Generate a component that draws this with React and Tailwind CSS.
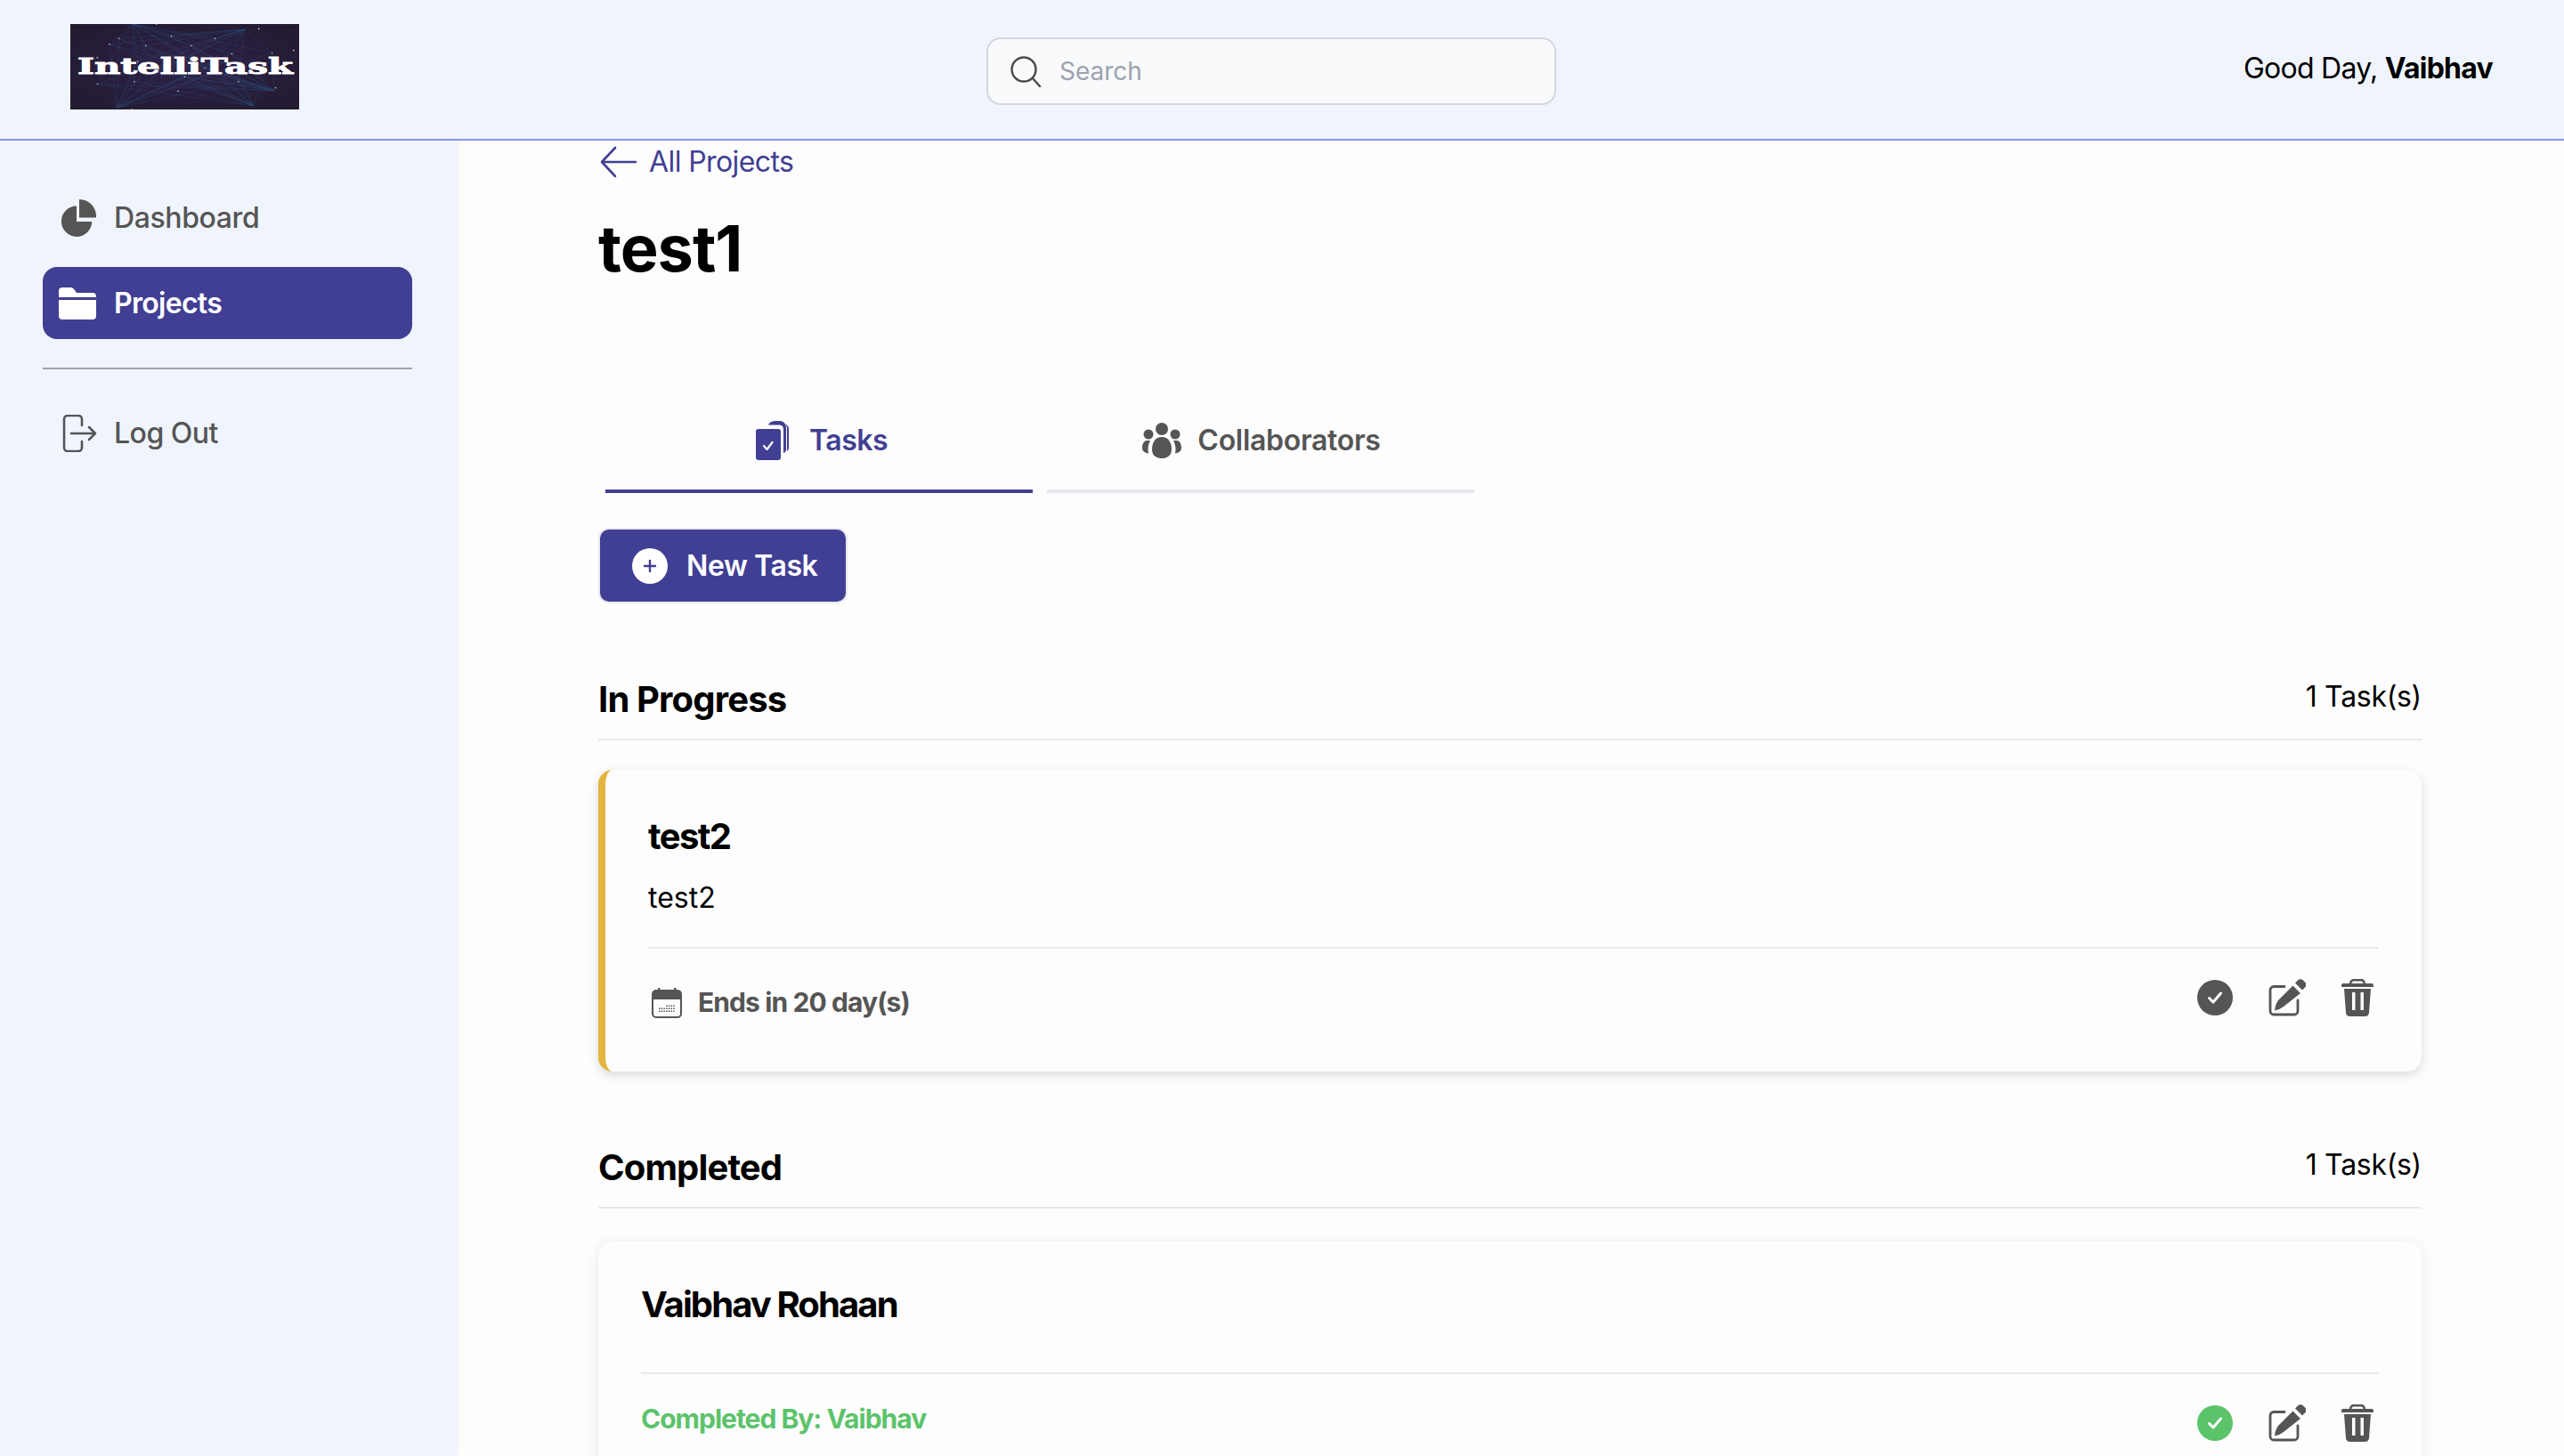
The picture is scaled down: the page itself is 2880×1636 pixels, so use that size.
import React from "react";

function Logo() {
  const hubs = [[128, 0], [280, 10], [332, 55], [305, 133], [92, 178], [40, 70], [160, 140]];
  const pts = [[58, 42], [72, 30], [112, 45], [150, 25], [180, 45], [215, 30], [240, 62], [215, 100], [170, 110], [130, 100], [95, 120], [40, 125], [250, 120], [200, 92], [100, 78], [300, 60]];
  return (
    <svg viewBox="0 0 256 96" className="w-[257px] h-[96px] block" preserveAspectRatio="none">
      <defs>
        <radialGradient id="bg" cx="50%" cy="50%" r="70%">
          <stop offset="0" stopColor="#2f2147" />
          <stop offset="1" stopColor="#211a2f" />
        </radialGradient>
      </defs>
      <rect width="256" height="96" fill="url(#bg)" />
      <g stroke="#2f6ea8" strokeWidth="0.35" opacity="0.55">
        {[[70, 0], [195, 6], [228, 75], [205, 92], [52, 94]].flatMap((h, i) =>
          pts.map((p, j) => (
            <line key={i + "-" + j} x1={h[0]} y1={h[1]} x2={(p[0] * 256) / 340} y2={(p[1] * 96) / 178} />
          ))
        )}
      </g>
      <g fill="#e8e8f0">
        {pts.map((p, i) => (
          <circle key={i} cx={(p[0] * 256) / 340} cy={(p[1] * 96) / 178} r="0.7" />
        ))}
        {hubs.map((h, i) => (
          <circle key={i} cx={(h[0] * 256) / 340} cy={(h[1] * 96) / 178} r="0.8" />
        ))}
      </g>
      <text x="8" y="56" fill="#ffffff" stroke="#ffffff" strokeWidth="0.9" fontFamily="'DejaVu Serif', serif" fontWeight="700" fontSize="25" textLength="241" lengthAdjust="spacingAndGlyphs">
        IntelliTask
      </text>
    </svg>
  );
}

function PieIcon() {
  return (
    <svg viewBox="0 0 40 42" className="w-10 h-[42px] shrink-0" fill="#555555">
      <path d="M18 7.5A17.2 17.2 0 1 0 35.3 25H18Z" />
      <path d="M21 0a19 19 0 0 1 19 20.5H21Z" />
    </svg>
  );
}

function FolderIcon() {
  return (
    <svg viewBox="0 0 42 36" className="w-[42px] h-9 shrink-0" fill="#ffffff">
      <path d="M0 4a4 4 0 0 1 4-4h9.5c1.5 0 2.5.7 3.4 1.8L20 6h18a4 4 0 0 1 4 4v1H0Z" />
      <path d="M0 14h42v18a4 4 0 0 1-4 4H4a4 4 0 0 1-4-4Z" />
    </svg>
  );
}

function LogoutIcon() {
  return (
    <svg viewBox="0 0 40 42" className="w-10 h-[42px] shrink-0" fill="none" stroke="#555555" strokeWidth="2.6" strokeLinecap="round" strokeLinejoin="round">
      <path d="M23 12V5a4 4 0 0 0-4-4H7a4 4 0 0 0-4 4v32a4 4 0 0 0 4 4h12a4 4 0 0 0 4-4v-7" />
      <path d="M11 21h27M31 14l7 7-7 7" />
    </svg>
  );
}

function TaskIcon() {
  return (
    <svg viewBox="0 0 38 44" className="w-[38px] h-11 shrink-0">
      <path d="M14 4.5C15 1.5 18 0 22 0h5a7 7 0 0 1 7 7v25c0 2-1 3.5-3 4V9c0-3-2-4.5-5-4.5Z" fill="#413f93" />
      <path d="M32 3c3 1 5 3 5 6v21c0 2-1 3-2 4V8c0-2-1-4-3-5Z" fill="#413f93" />
      <path d="M3 9h22a3 3 0 0 1 3 3v29a3 3 0 0 1-3 3H3a3 3 0 0 1-3-3V12a3 3 0 0 1 3-3Z" fill="#413f93" />
      <path d="M9 28l3.5 4 6-8" fill="none" stroke="#ffffff" strokeWidth="2.2" strokeLinecap="round" strokeLinejoin="round" />
    </svg>
  );
}

function PeopleIcon() {
  return (
    <svg viewBox="0 0 44 40" className="w-11 h-10 shrink-0" fill="#555555">
      <circle cx="22" cy="7" r="7" />
      <circle cx="7" cy="13" r="5.5" />
      <circle cx="37" cy="13" r="5.5" />
      <path d="M22 16c7 0 11 6 11 14 0 7-5 10-11 10s-11-3-11-10c0-8 4-14 11-14Z" />
      <path d="M5 20h4c-1.500 3-2.500 6-2.500 10 0 1.500.2 3 .7 4.500C3 34 0 32 0 28c0-4 2-8 5-8Z" />
      <path d="M39 20h-4c1.500 3 2.500 6 2.500 10 0 1.500-.2 3-.7 4.500C41 34 44 32 44 28c0-4-2-8-5-8Z" />
    </svg>
  );
}

function CheckCircle({ color }) {
  return (
    <svg viewBox="0 0 40 40" className="w-10 h-10 shrink-0 mt-px">
      <circle cx="20" cy="20" r="20" fill={color} />
      <path d="M13.500 20.500l4.500 4.500 8.500-10" fill="none" stroke="#ffffff" strokeWidth="3" strokeLinecap="round" strokeLinejoin="round" />
    </svg>
  );
}

function EditIcon() {
  return (
    <svg viewBox="0 0 42 42" className="w-[42px] h-[42px] shrink-0">
      <path d="M18 8.500H6a4 4 0 0 0-4 4V36a4 4 0 0 0 4 4h23a4 4 0 0 0 4-4V24" fill="none" stroke="#555555" strokeWidth="2.8" strokeLinecap="round" />
      <path d="M27.500 7.500 36 16 17 31Q12 35 7 35.500 7.500 29 11 24Z" fill="#555555" />
      <path d="M30 4.500 33 1.500a4 4 0 0 1 6 0l2 2a4 4 0 0 1 0 6L38 12.500Z" fill="#555555" />
    </svg>
  );
}

function TrashIcon() {
  return (
    <svg viewBox="0 0 36 42" className="w-9 h-[42px] shrink-0" fill="#555555">
      <path d="M9 6V5c0-3 2-5 5-5h8c3 0 5 2 5 5v1h-2.500V5c0-1.500-1-2.500-2.500-2.500h-8C12.500 2.500 11.500 3.500 11.500 5v1Z" />
      <path d="M2 5h32a2 2 0 0 1 2 2v2H0V7a2 2 0 0 1 2-2Z" />
      <path fillRule="evenodd" d="M3 11h30l-2 27c-.2 2.500-2 4-4.500 4h-17C7 42 5.200 40.500 5 38ZM12 15v20h3.500V15Zm9.500 0v20H25V15Z" />
    </svg>
  );
}

function CalendarIcon() {
  const dots = [];
  for (let r = 0; r < 3; r++) {
    for (let c = 0; c < 7; c++) {
      if (r === 0 && c < 3) continue;
      dots.push(<rect key={r + "-" + c} x={8 + c * 2.7} y={19.5 + r * 3} width="1.5" height="1.5" fill="#555555" />);
    }
  }
  return (
    <svg viewBox="0 0 34 34" className="w-[34px] h-[34px] shrink-0">
      <rect x="1" y="3" width="32" height="30" rx="4" fill="none" stroke="#555555" strokeWidth="2" />
      <path d="M1 7a4 4 0 0 1 4-4h24a4 4 0 0 1 4 4v6H1Z" fill="#555555" />
      <rect x="7" y="0" width="2.4" height="6" fill="#555555" />
      <rect x="25" y="0" width="2.4" height="6" fill="#555555" />
      {dots}
    </svg>
  );
}

function SearchIcon() {
  return (
    <svg viewBox="0 0 36 36" className="w-9 h-9 shrink-0" fill="none" stroke="#4b4b4b" strokeWidth="2.4" strokeLinecap="round">
      <circle cx="16" cy="16" r="13.500" />
      <path d="M26 26l8 9" />
    </svg>
  );
}

function BackArrow() {
  return (
    <svg viewBox="0 0 42 36" className="w-[42px] h-9 shrink-0" fill="none" stroke="#413f93" strokeWidth="2.6" strokeLinecap="round" strokeLinejoin="round">
      <path d="M40 18H2M17 2 2 18l15 16" />
    </svg>
  );
}

function PlusIcon() {
  return (
    <div className="w-10 h-10 rounded-full bg-white flex items-center justify-center shrink-0">
      <svg viewBox="0 0 16 16" className="w-4 h-4" fill="none" stroke="#413f93" strokeWidth="2.4" strokeLinecap="round">
        <path d="M8 2v12M2 8h12" />
      </svg>
    </div>
  );
}

function Actions({ checkColor }) {
  return (
    <div className="flex items-start gap-10 pr-[6px]">
      <CheckCircle color={checkColor} />
      <EditIcon />
      <TrashIcon />
    </div>
  );
}

function SectionHeader({ title }) {
  return (
    <div className="flex items-start justify-between border-b-2 border-[#e8e8ef] h-[71px]">
      <h2 className="text-[40px] leading-[50px] font-bold text-black tracking-[-0.85px]">{title}</h2>
      <span className="text-[32px] leading-[44px] text-black tracking-[-0.3px]">1 Task(s)</span>
    </div>
  );
}

export default function App() {
  return (
    <div className="h-screen overflow-hidden flex flex-col bg-[#fdfdfd] font-['Inter',sans-serif]">
      <header className="h-[158px] shrink-0 flex items-center justify-between bg-[#f0f4fd] border-b-2 border-[#8b93e8] pl-[79px] pr-[80px]">
        <div className="-mt-[6px]">
          <Logo />
        </div>
        <div className="w-[640px] h-[76px] mt-[4px] rounded-2xl border-2 border-[#d4d6de] bg-[#f9fafc] flex items-center pl-6 gap-[20px] text-[28px] text-[#9ca3af]">
          <SearchIcon />
          <span>Search</span>
        </div>
        <div className="text-[32px] text-black -mt-[2px] tracking-[-0.75px]">
          Good Day, <span className="font-bold">Vaibhav</span>
        </div>
      </header>

      <div className="flex-1 flex min-h-0">
        <aside className="w-[514px] shrink-0 bg-[#f0f4fd] pl-12 pr-[51px] pt-[47px] shadow-[1px_0_3px_rgba(0,0,0,0.04)]">
          <div className="h-[80px] flex items-center gap-[20px] pl-[20px] text-[32px] font-medium text-[#555555] tracking-[-0.4px]">
            <PieIcon />
            <span>Dashboard</span>
          </div>
          <div className="mt-[15px] h-[81px] rounded-2xl bg-[#413f93] flex items-center gap-[20px] pl-[18px] text-[32px] font-semibold text-white tracking-[-0.7px]">
            <FolderIcon />
            <span>Projects</span>
          </div>
          <div className="mt-[32px] h-[2px] bg-[#9ca3af]" />
          <div className="mt-[32px] h-[80px] flex items-center gap-[19px] pl-[21px] text-[32px] font-medium text-[#555555] tracking-[-0.5px]">
            <LogoutIcon />
            <span>Log Out</span>
          </div>
        </aside>

        <main className="flex-1 min-w-0 overflow-hidden pl-[158px] pr-[160px]">
          <div className="h-[48px] flex items-center gap-[13px] pl-[2px] text-[32px] text-[#413f93] tracking-[-0.6px]">
            <BackArrow />
            <span>All Projects</span>
          </div>
          <h1 className="mt-[33px] text-[72px] leading-[80px] font-bold text-black tracking-[-1px]">test1</h1>

          <div className="mt-[134px] ml-[8px] flex gap-4">
            <div className="w-[480px] h-[101px] border-b-4 border-[#413f93] flex items-center justify-center gap-[22px] pl-[6px] text-[32px] font-semibold text-[#413f93] pb-[14px] tracking-[-0.5px]">
              <TaskIcon />
              <span>Tasks</span>
            </div>
            <div className="w-[480px] h-[101px] border-b-4 border-[#e6e7ec] flex items-center justify-center gap-[18px] pl-[2px] text-[32px] font-semibold text-[#555555] pb-[14px] tracking-[-0.3px]">
              <PeopleIcon />
              <span>Collaborators</span>
            </div>
          </div>

          <div className="mt-[39px] w-[280px] h-[85px] rounded-xl bg-[#413f93] border-2 border-[#e8e8f0] flex items-center gap-[21px] pl-[36px] text-[32px] font-semibold text-white tracking-[-0.4px]">
            <PlusIcon />
            <span>New Task</span>
          </div>

          <section className="mt-[83px]">
            <SectionHeader title="In Progress" />
            <div className="mt-[33px] h-[339px] rounded-2xl border-l-[8px] border-[#e3b53f] bg-[#fdfdfd] shadow-[0_4px_12px_rgba(0,0,0,0.14)] pl-[48px] pr-[48px] flex flex-col">
              <h3 className="mt-[50px] text-[40px] leading-[50px] font-bold text-black tracking-[-1.6px]">test2</h3>
              <p className="mt-[20px] text-[32px] leading-[48px] text-black">test2</p>
              <div className="mt-[31px] border-t-2 border-[#e8e8ef] pt-[34px] flex items-start justify-between">
                <div className="flex items-center gap-[18px] pl-[4px] mt-[4px] text-[30px] font-bold text-[#555555] tracking-[-0.9px]">
                  <CalendarIcon />
                  <span>Ends in 20 day(s)</span>
                </div>
                <Actions checkColor="#555555" />
              </div>
            </div>
          </section>

          <section className="mt-[83px]">
            <SectionHeader title="Completed" />
            <div className="mt-[37px] h-[400px] rounded-2xl bg-[#fdfdfd] shadow-[0_2px_14px_rgba(0,0,0,0.09)] pl-[48px] pr-[48px] flex flex-col">
              <h3 className="mt-[46px] text-[40px] leading-[50px] font-bold text-black tracking-[-1.9px]">Vaibhav Rohaan</h3>
              <div className="mt-[51px] border-t-2 border-[#e8e8ef] pt-[34px] flex items-start justify-between">
                <span className="text-[30px] font-bold text-[#5cc36b] -mt-[6px] tracking-[-1px]">Completed By: Vaibhav</span>
                <Actions checkColor="#5cc36b" />
              </div>
            </div>
          </section>
        </main>
      </div>
    </div>
  );
}
